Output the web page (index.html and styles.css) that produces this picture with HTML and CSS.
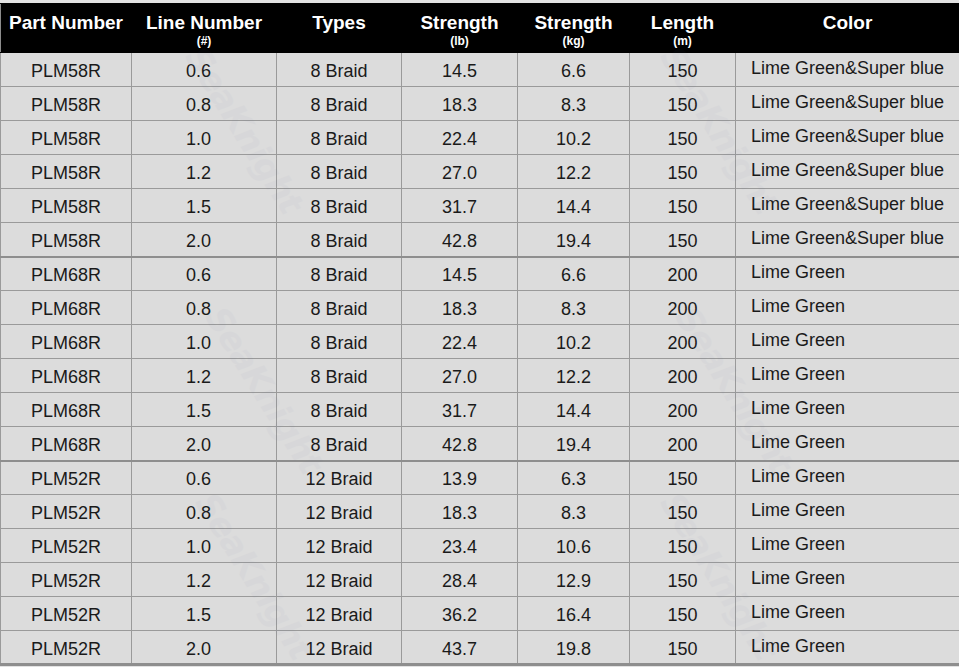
FILE: index.html
```html
<!DOCTYPE html>
<html>
<head>
<meta charset="utf-8">
<link rel="stylesheet" href="styles.css">
</head>
<body>
<div class="sheet">
<table class="spec">
  <colgroup>
    <col class="c1"><col class="c2"><col class="c3"><col class="c4"><col class="c5"><col class="c6"><col class="c7">
  </colgroup>
  <thead>
    <tr>
      <th><span class="main">Part Number</span></th>
      <th><span class="main">Line Number</span><span class="unit">(#)</span></th>
      <th><span class="main">Types</span></th>
      <th><span class="main">Strength</span><span class="unit">(lb)</span></th>
      <th><span class="main">Strength</span><span class="unit">(kg)</span></th>
      <th><span class="main">Length</span><span class="unit">(m)</span></th>
      <th><span class="main">Color</span></th>
    </tr>
  </thead>
  <tbody>
    <tr><td>PLM58R</td><td class="num">0.6</td><td>8 Braid</td><td>14.5</td><td>6.6</td><td>150</td><td class="color">Lime Green&amp;Super blue</td></tr>
    <tr><td>PLM58R</td><td class="num">0.8</td><td>8 Braid</td><td>18.3</td><td>8.3</td><td>150</td><td class="color">Lime Green&amp;Super blue</td></tr>
    <tr><td>PLM58R</td><td class="num">1.0</td><td>8 Braid</td><td>22.4</td><td>10.2</td><td>150</td><td class="color">Lime Green&amp;Super blue</td></tr>
    <tr><td>PLM58R</td><td class="num">1.2</td><td>8 Braid</td><td>27.0</td><td>12.2</td><td>150</td><td class="color">Lime Green&amp;Super blue</td></tr>
    <tr><td>PLM58R</td><td class="num">1.5</td><td>8 Braid</td><td>31.7</td><td>14.4</td><td>150</td><td class="color">Lime Green&amp;Super blue</td></tr>
    <tr><td>PLM58R</td><td class="num">2.0</td><td>8 Braid</td><td>42.8</td><td>19.4</td><td>150</td><td class="color">Lime Green&amp;Super blue</td></tr>
    <tr class="grp"><td>PLM68R</td><td class="num">0.6</td><td>8 Braid</td><td>14.5</td><td>6.6</td><td>200</td><td class="color">Lime Green</td></tr>
    <tr><td>PLM68R</td><td class="num">0.8</td><td>8 Braid</td><td>18.3</td><td>8.3</td><td>200</td><td class="color">Lime Green</td></tr>
    <tr><td>PLM68R</td><td class="num">1.0</td><td>8 Braid</td><td>22.4</td><td>10.2</td><td>200</td><td class="color">Lime Green</td></tr>
    <tr><td>PLM68R</td><td class="num">1.2</td><td>8 Braid</td><td>27.0</td><td>12.2</td><td>200</td><td class="color">Lime Green</td></tr>
    <tr><td>PLM68R</td><td class="num">1.5</td><td>8 Braid</td><td>31.7</td><td>14.4</td><td>200</td><td class="color">Lime Green</td></tr>
    <tr><td>PLM68R</td><td class="num">2.0</td><td>8 Braid</td><td>42.8</td><td>19.4</td><td>200</td><td class="color">Lime Green</td></tr>
    <tr class="grp"><td>PLM52R</td><td class="num">0.6</td><td>12 Braid</td><td>13.9</td><td>6.3</td><td>150</td><td class="color">Lime Green</td></tr>
    <tr><td>PLM52R</td><td class="num">0.8</td><td>12 Braid</td><td>18.3</td><td>8.3</td><td>150</td><td class="color">Lime Green</td></tr>
    <tr><td>PLM52R</td><td class="num">1.0</td><td>12 Braid</td><td>23.4</td><td>10.6</td><td>150</td><td class="color">Lime Green</td></tr>
    <tr><td>PLM52R</td><td class="num">1.2</td><td>12 Braid</td><td>28.4</td><td>12.9</td><td>150</td><td class="color">Lime Green</td></tr>
    <tr><td>PLM52R</td><td class="num">1.5</td><td>12 Braid</td><td>36.2</td><td>16.4</td><td>150</td><td class="color">Lime Green</td></tr>
    <tr class="last"><td>PLM52R</td><td class="num">2.0</td><td>12 Braid</td><td>43.7</td><td>19.8</td><td>150</td><td class="color">Lime Green</td></tr>
  </tbody>
</table>
<span class="wm wm1">SeaKnight</span>
<span class="wm wm2">SeaKnight</span>
<span class="wm wm3">SeaKnight</span>
<span class="wm wm4">SeaKnight</span>
<span class="wm wm5">SeaKnight</span>
<span class="wm wm6">SeaKnight</span>
</div>
</body>
</html>
```

FILE: styles.css
```css
html, body {
  margin: 0;
  padding: 0;
  background: #ffffff;
}

body {
  font-family: "Liberation Sans", Arial, sans-serif;
}

.sheet {
  position: relative;
  width: 959px;
  height: 667px;
  padding-top: 3px;
  box-sizing: border-box;
  background: #e2e2e2;
  overflow: hidden;
}

.spec {
  border-collapse: collapse;
  table-layout: fixed;
  width: 959px;
}

.c1 { width: 131px; }
.c2 { width: 145px; }
.c3 { width: 125px; }
.c4 { width: 116px; }
.c5 { width: 112px; }
.c6 { width: 106px; }
.c7 { width: 224px; }

.spec th {
  background: #000000;
  color: #ffffff;
  height: 48px;
  padding: 0;
  vertical-align: top;
  text-align: center;
  font-weight: bold;
  border: 1px solid #000000;
  border-left: 1px solid #8c8c8c;
}

.spec th + th {
  border-left-color: #000000;
}

.spec th:last-child {
  border-right: 1px solid #8c8c8c;
}

.spec th .main {
  display: block;
  font-size: 19px;
  line-height: 22px;
  padding-top: 8px;
}

.spec th .unit {
  display: block;
  font-size: 12px;
  line-height: 12px;
  margin-top: 1px;
}

.spec td {
  background: #dcdcdc;
  color: #1a1a1a;
  font-size: 18px;
  height: 34px;
  padding: 3px 0 0 0;
  box-sizing: border-box;
  text-align: center;
  vertical-align: middle;
  border: 1px solid #9a9a9a;
  line-height: 20px;
}

.spec td.num {
  padding-right: 11px;
}

.spec td.color {
  text-align: left;
  padding: 0 0 3px 15px;
}

.spec tr.grp td {
  border-top: 2px solid #8e8e8e;
}

.spec tr.last td {
  border-bottom: 3px solid #8e8e8e;
}

.wm {
  position: absolute;
  font-family: "DejaVu Sans", sans-serif;
  font-weight: bold;
  font-style: italic;
  font-size: 34px;
  color: #5d6f9c;
  opacity: 0.035;
  transform: rotate(58deg);
  pointer-events: none;
  letter-spacing: -1px;
}

.wm1 { left: 150px; top: 110px; }
.wm2 { left: 625px; top: 110px; }
.wm3 { left: 170px; top: 370px; }
.wm4 { left: 640px; top: 370px; }
.wm5 { left: 160px; top: 556px; }
.wm6 { left: 625px; top: 556px; }
```
